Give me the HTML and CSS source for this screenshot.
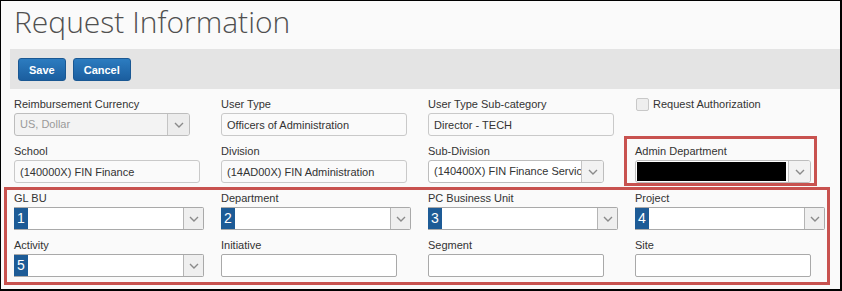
FILE: index.html
```html
<!DOCTYPE html>
<html lang="en">
<head>
  <meta charset="UTF-8">
  <title>Request Information</title>
  <link rel="stylesheet" href="styles.css">
</head>
<body>
  <div class="frame">
    <!-- Page title -->
    <h1 class="page-title">Request Information</h1>

    <!-- Toolbar with actions -->
    <div class="toolbar">
      <button class="btn">Save</button>
      <button class="btn">Cancel</button>
    </div>

    <div class="form">
      <!-- Row 1 -->
      <div class="row">
        <div class="field">
          <label>Reimbursement Currency</label>
          <div class="select disabled w176">
            <span class="value">US, Dollar</span>
            <span class="arrow"><svg width="10" height="6" viewBox="0 0 10 6"><polyline points="1,1 5,5 9,1" fill="none" stroke="#8a8a8a" stroke-width="1.4"/></svg></span>
          </div>
        </div>
        <div class="field">
          <label>User Type</label>
          <input class="text readonly w186" type="text" value="Officers of Administration" readonly>
        </div>
        <div class="field">
          <label>User Type Sub-category</label>
          <input class="text readonly w186" type="text" value="Director - TECH" readonly>
        </div>
        <div class="field">
          <div class="check-line">
            <span class="checkbox"></span>
            <span>Request Authorization</span>
          </div>
        </div>
      </div>

      <!-- Row 2 -->
      <div class="row">
        <div class="field">
          <label>School</label>
          <input class="text readonly w186" type="text" value="(140000X) FIN Finance" readonly>
        </div>
        <div class="field">
          <label>Division</label>
          <input class="text readonly w186" type="text" value="(14AD00X) FIN Administration" readonly>
        </div>
        <div class="field">
          <label>Sub-Division</label>
          <div class="select w176">
            <span class="value">(140400X) FIN Finance Servic</span>
            <span class="arrow"><svg width="10" height="6" viewBox="0 0 10 6"><polyline points="1,1 5,5 9,1" fill="none" stroke="#8a8a8a" stroke-width="1.4"/></svg></span>
          </div>
        </div>
        <div class="field marked">
          <label>Admin Department</label>
          <div class="select w176">
            <span class="value"><span class="redacted"></span></span>
            <span class="arrow"><svg width="10" height="6" viewBox="0 0 10 6"><polyline points="1,1 5,5 9,1" fill="none" stroke="#8a8a8a" stroke-width="1.4"/></svg></span>
          </div>
        </div>
      </div>

      <!-- Highlighted accounting fields -->
      <div class="group marked-group">
        <div class="row">
          <div class="field">
            <label>GL BU</label>
            <div class="select coded w190">
              <span class="badge">1</span>
              <span class="value"></span>
              <span class="arrow"><svg width="10" height="6" viewBox="0 0 10 6"><polyline points="1,1 5,5 9,1" fill="none" stroke="#8a8a8a" stroke-width="1.4"/></svg></span>
            </div>
          </div>
          <div class="field">
            <label>Department</label>
            <div class="select coded w190">
              <span class="badge">2</span>
              <span class="value"></span>
              <span class="arrow"><svg width="10" height="6" viewBox="0 0 10 6"><polyline points="1,1 5,5 9,1" fill="none" stroke="#8a8a8a" stroke-width="1.4"/></svg></span>
            </div>
          </div>
          <div class="field">
            <label>PC Business Unit</label>
            <div class="select coded w190">
              <span class="badge">3</span>
              <span class="value"></span>
              <span class="arrow"><svg width="10" height="6" viewBox="0 0 10 6"><polyline points="1,1 5,5 9,1" fill="none" stroke="#8a8a8a" stroke-width="1.4"/></svg></span>
            </div>
          </div>
          <div class="field">
            <label>Project</label>
            <div class="select coded w190">
              <span class="badge">4</span>
              <span class="value"></span>
              <span class="arrow"><svg width="10" height="6" viewBox="0 0 10 6"><polyline points="1,1 5,5 9,1" fill="none" stroke="#8a8a8a" stroke-width="1.4"/></svg></span>
            </div>
          </div>
        </div>

        <div class="row">
          <div class="field">
            <label>Activity</label>
            <div class="select coded w190">
              <span class="badge">5</span>
              <span class="value"></span>
              <span class="arrow"><svg width="10" height="6" viewBox="0 0 10 6"><polyline points="1,1 5,5 9,1" fill="none" stroke="#8a8a8a" stroke-width="1.4"/></svg></span>
            </div>
          </div>
          <div class="field">
            <label>Initiative</label>
            <input class="text w176" type="text" value="">
          </div>
          <div class="field">
            <label>Segment</label>
            <input class="text w176" type="text" value="">
          </div>
          <div class="field">
            <label>Site</label>
            <input class="text w176" type="text" value="">
          </div>
        </div>
      </div>
    </div>
  </div>
</body>
</html>
```

FILE: styles.css
```css
/* Base */
* { box-sizing: border-box; }
body {
  margin: 0;
  font-family: 'Liberation Sans', Arial, sans-serif;
  font-size: 11px;
  color: #333;
}
.frame {
  width: 842px;
  height: 291px;
  border-style: solid;
  border-color: #000;
  border-width: 1px 2px 2px 1px;
  background: #fafafa;
  overflow: hidden;
}
/* Title */
.page-title {
  margin: 1px 0 7px 13px;
  font-family: 'Open Sans', sans-serif;
  font-weight: 300;
  font-size: 30px;
  line-height: 40px;
  color: #505050;
}
/* Toolbar */
.toolbar {
  margin-left: 9px;
  height: 40px;
  padding: 9px 8px 0;
  background: #e4e4e4;
  display: flex;
  gap: 7px;
  align-items: flex-start;
}
.btn {
  height: 23px;
  padding: 0 10px;
  font-family: 'Liberation Sans', Arial, sans-serif;
  font-size: 11px;
  font-weight: bold;
  color: #fff;
  background: linear-gradient(#2c7cc0, #1b5e9f);
  border: 1px solid #1a5893;
  border-radius: 3px;
  cursor: pointer;
}
/* Form grid */
.form {
  margin-top: 8px;
  padding-left: 13px;
  display: flex;
  flex-direction: column;
  gap: 8px;
}
.group {
  display: flex;
  flex-direction: column;
  gap: 8px;
}
.row {
  display: grid;
  grid-template-columns: 207px 207px 207px auto;
}
.field { position: relative; }
.field label {
  display: block;
  line-height: 14px;
  margin-bottom: 2px;
  white-space: nowrap;
}
/* Text inputs */
.text {
  display: block;
  height: 23px;
  padding: 0 5px;
  font-family: 'Liberation Sans', Arial, sans-serif;
  font-size: 11px;
  color: #333;
  background: #fff;
  border: 1px solid #a9a9a9;
  border-radius: 2px;
  outline: none;
}
.text.readonly {
  background: #fafafa;
  border-color: #c9c9c9;
  border-radius: 3px;
}
.w176 { width: 176px; }
.w186 { width: 186px; }
.w190 { width: 190px; }
/* Selects */
.select {
  display: flex;
  height: 23px;
  background: #fff;
  border: 1px solid #bdbdbd;
  border-radius: 3px;
  overflow: hidden;
}
.select .value {
  flex: 1;
  min-width: 0;
  padding: 0 5px;
  line-height: 21px;
  white-space: nowrap;
  overflow: hidden;
}
.select .arrow {
  width: 22px;
  flex: none;
  display: flex;
  align-items: center;
  justify-content: center;
  background: #f2f2f2;
  border-left: 1px solid #c4c4c4;
}
.select.disabled { background: #f3f3f3; }
.select.disabled .value { color: #9a9a9a; }
.select.disabled .arrow { background: #ececec; }
.select.coded {
  border-color: #a9a9a9;
  border-left: none;
  border-radius: 0 2px 2px 0;
}
.select.coded .arrow {
  width: 20px;
  background: #efefef;
  border-left-color: #b5b5b5;
}
.badge {
  width: 14px;
  flex: none;
  background: #1d5b96;
  color: #fff;
  font-size: 14px;
  line-height: 21px;
  text-align: center;
}
.redacted {
  display: block;
  height: 19px;
  margin: 1px -3px 0 -4px;
  background: #000;
}
/* Checkbox */
.check-line {
  display: flex;
  align-items: center;
  gap: 4px;
  line-height: 14px;
  margin-left: 1px;
}
.checkbox {
  width: 13px;
  height: 13px;
  border: 1px solid #c8c8c8;
  border-radius: 2px;
  background: #eee;
}
/* Red annotation boxes */
.marked::after,
.marked-group::after {
  content: "";
  position: absolute;
  border: 3px solid #c8524f;
  pointer-events: none;
}
.marked::after {
  top: -8px;
  left: -11px;
  right: 23px;
  bottom: -3px;
}
.marked-group { position: relative; }
.marked-group::after {
  top: -4px;
  left: -10px;
  right: 10px;
  bottom: -8px;
}
```
